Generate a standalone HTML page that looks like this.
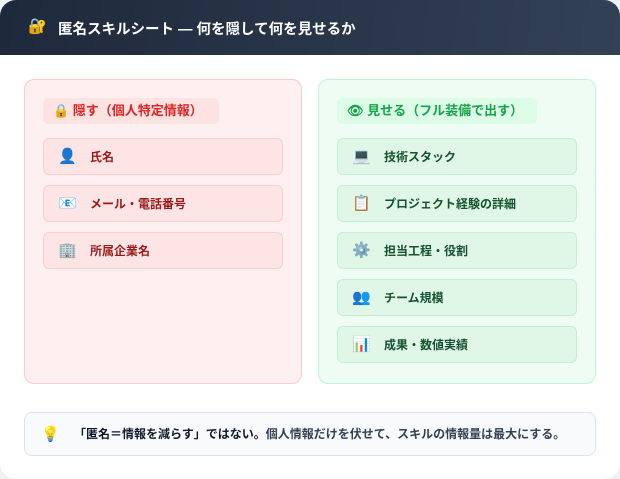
<!DOCTYPE html>
<html><head><meta charset="utf-8"><style>
*{margin:0;padding:0;box-sizing:border-box}
body{width:620px;height:479px;background:#eef0f3;font-family:"Liberation Sans","Noto Sans CJK JP",sans-serif;overflow:hidden}
.card{position:absolute;left:0;top:0;width:620px;height:479px;background:#fff;border-radius:16px;overflow:hidden}
.hdr{position:absolute;left:0;top:0;width:620px;height:55px;background:linear-gradient(100deg,#1e293b,#334155);color:#fff;font-size:14.5px;font-weight:bold}
.hdr span{position:absolute;left:58px;top:18px}
.hdr i{position:absolute;left:28px;top:17px;font-style:normal;font-size:15px}
.panel{position:absolute;top:79px;height:305px;border-radius:10px}
.l{left:24px;width:278px;background:#fef0f0;border:1px solid #fecaca}
.r{left:318px;width:278px;background:#effcf3;border:1px solid #bbf7d0}
.badge{position:absolute;left:18px;top:18px;height:26px;border-radius:5px;font-size:13px;font-weight:bold;line-height:26px;padding-left:10px}
.l .badge{width:176px;background:#fde2e2;color:#dc2626}
.r .badge{width:200px;background:#dcfce7;color:#16a34a}
.it{position:absolute;left:18px;width:240px;height:37px;border-radius:6px;font-size:12px;font-weight:bold;line-height:36px;padding-left:46px}
.l .it{background:#fee5e5;border:1px solid #fbcfcf;color:#991b1b}
.r .it{background:#e0f7e7;border:1px solid #c4f0d2;color:#14532d}
.ic{position:absolute;left:14px;top:0;font-size:15px;font-weight:normal}
.tip{position:absolute;left:24px;top:412px;width:572px;height:44px;background:#f8fafc;border:1px solid #dbe3ee;border-radius:8px;font-size:12px;line-height:43px;padding-left:49px;color:#334155;font-weight:bold}
.tip i{position:absolute;left:16px;top:0;font-style:normal;font-size:15px;font-weight:normal}
</style></head><body><div class="card">
<div class="hdr"><i>🔐</i><span>匿名スキルシート — 何を隠して何を見せるか</span></div>
<div class="panel l">
<div class="badge">🔒 隠す（個人特定情報）</div>
<div class="it" style="top:58px"><span class="ic">👤</span>氏名</div>
<div class="it" style="top:105px"><span class="ic">📧</span>メール・電話番号</div>
<div class="it" style="top:152px"><span class="ic">🏢</span>所属企業名</div>
</div>
<div class="panel r">
<div class="badge">👁 見せる（フル装備で出す）</div>
<div class="it" style="top:58px"><span class="ic">💻</span>技術スタック</div>
<div class="it" style="top:105px"><span class="ic">📋</span>プロジェクト経験の詳細</div>
<div class="it" style="top:152px"><span class="ic">⚙️</span>担当工程・役割</div>
<div class="it" style="top:199px"><span class="ic">👥</span>チーム規模</div>
<div class="it" style="top:246px"><span class="ic">📊</span>成果・数値実績</div>
</div>
<div class="tip"><i>💡</i><span style="color:#0f172a">「匿名＝情報を減らす」ではない。</span>個人情報だけを伏せて、スキルの情報量は最大にする。</div>
</div></body></html>
